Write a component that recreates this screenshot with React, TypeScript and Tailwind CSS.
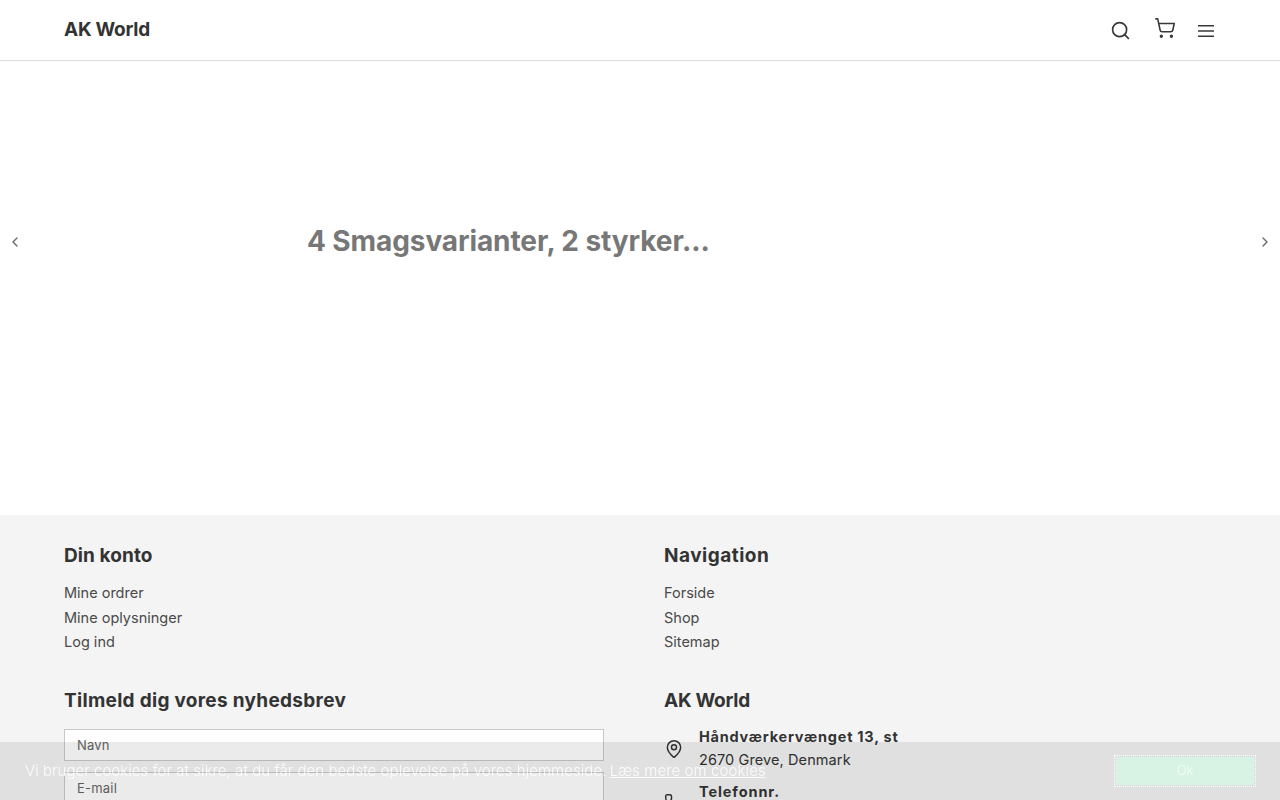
import React from 'react';
import { Search, ShoppingCart, ChevronLeft, ChevronRight, MapPin, Phone } from 'lucide-react';

const FooterLinks: React.FC<{ title: string; titleClass: string; links: string[] }> = ({ title, titleClass, links }) => (
  <div>
    <h4 className={`text-[19px] leading-[28px] font-bold text-[#333] ${titleClass}`}>{title}</h4>
    <ul className="mt-[11px] text-[14.5px] text-[#4a4a4a]">
      {links.map(l => (
        <li key={l} className="h-[24.5px] leading-[24px]">{l}</li>
      ))}
    </ul>
  </div>
);

const App: React.FC = () => {
  return (
    <div className="h-[800px] overflow-hidden bg-white font-['Inter','Liberation_Sans',sans-serif]">
      {/* Header */}
      <header className="h-[61px] border-b border-[#dcdcdc] px-16 flex items-center justify-between">
        <span className="text-[19px] font-bold text-[#333] tracking-[-0.25px]">AK World</span>
        <div className="flex items-center text-[#383838]">
          <Search className="w-[21px] h-[21px] mr-[24px]" strokeWidth={1.9} />
          <ShoppingCart className="w-[22px] h-[22px] mr-[22px] -mt-[4px] -ml-[1px]" strokeWidth={1.7} />
          <svg className="w-[16px] h-[12px] mr-[2px] mt-[1px]" viewBox="0 0 16 12" fill="none" stroke="currentColor" strokeWidth="1.5">
            <path d="M0 .75h16M0 6h16M0 11.25h16" />
          </svg>
        </div>
      </header>

      {/* Slider */}
      <section className="h-[454px] relative">
        <ChevronLeft className="absolute left-[7px] top-[173px] w-[16px] h-[16px] text-[#666]" strokeWidth={2} />
        <ChevronRight className="absolute right-[7px] top-[173px] w-[16px] h-[16px] text-[#666]" strokeWidth={2} />
        <div className="pl-[307px] pt-[160px]">
          <h2 className="text-[28px] leading-[40px] font-bold text-[#777] tracking-[-0.1px]">4 Smagsvarianter, 2 styrker...</h2>
        </div>
      </section>

      {/* Footer */}
      <footer className="bg-[#f4f4f4] px-16 pt-[27px]">
        <div className="grid grid-cols-[600px_1fr]">
          <FooterLinks title="Din konto" titleClass="tracking-[0.1px]" links={['Mine ordrer', 'Mine oplysninger', 'Log ind']} />
          <FooterLinks title="Navigation" titleClass="tracking-[0.5px]" links={['Forside', 'Shop', 'Sitemap']} />

          <div className="mt-[32px]">
            <h4 className="text-[19px] leading-[28px] font-bold text-[#333] tracking-[0.3px]">Tilmeld dig vores nyhedsbrev</h4>
            <input placeholder="Navn" className="mt-[14px] block w-[540px] h-[32px] px-3 bg-white border border-[#c8c8c8] text-[13px] tracking-[0.2px] placeholder:text-[#666]" />
            <input placeholder="E-mail" className="mt-[11px] block w-[540px] h-[32px] px-3 bg-white border border-[#c8c8c8] text-[13px] tracking-[0.2px] placeholder:text-[#666]" />
          </div>
          <div className="mt-[32px]">
            <h4 className="text-[19px] leading-[28px] font-bold text-[#333] tracking-[-0.25px]">AK World</h4>
            <div className="mt-[10px] flex items-center gap-[15px] text-[14.5px] text-[#333]">
              <MapPin className="w-[20px] h-[20px] mt-[2px]" strokeWidth={1.75} />
              <div className="leading-[23px]">
                <div className="font-bold tracking-[0.75px]">Håndværkervænget 13, st</div>
                <div className="tracking-[0.1px]">2670 Greve, Denmark</div>
              </div>
            </div>
            <div className="mt-[9px] flex items-center gap-[15px] text-[14.5px] text-[#333]">
              <Phone className="w-[20px] h-[20px]" strokeWidth={1.75} />
              <div className="leading-[23px]">
                <div className="font-bold tracking-[0.9px]">Telefonnr.</div>
                <div>+45 00 00 00 00</div>
              </div>
            </div>
          </div>
        </div>
      </footer>

      {/* Cookie bar */}
      <div className="fixed left-0 right-0 bottom-0 h-[58px] bg-black/[0.08] flex items-center justify-between pl-[25px] pr-[26px] text-[15px] font-light text-white/85">
        <p>
          <span className="tracking-[0.055px]">Vi bruger cookies for at sikre, at du får den bedste oplevelse på vores hjemmeside.</span>{' '}
          <a className="underline -ml-[1px] tracking-[0.1px]">Læs mere om cookies</a>
        </p>
        <button className="w-[138px] h-[28px] bg-[#d8f3e3] outline-1 outline-dotted outline-white outline-offset-1 text-[13px] text-white/70">Ok</button>
      </div>
    </div>
  );
};

export default App;
